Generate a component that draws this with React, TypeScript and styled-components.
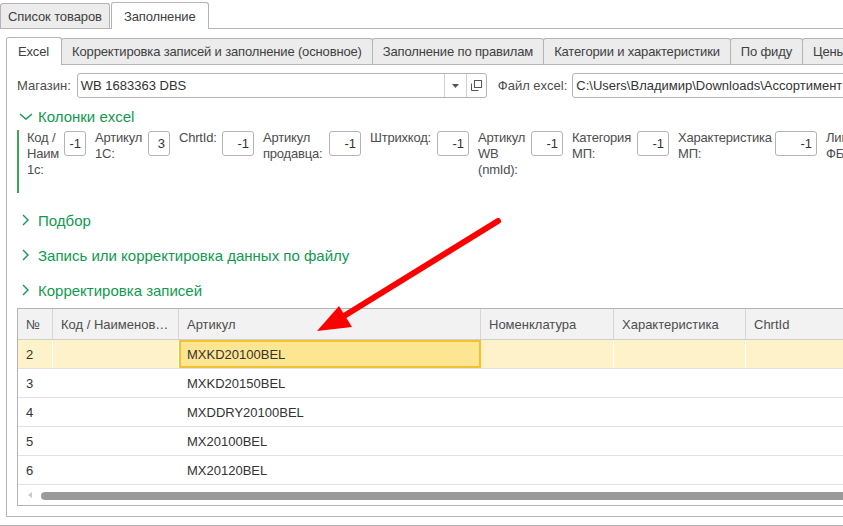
import React from "react";
import styled, { createGlobalStyle } from "styled-components";

const GlobalStyle = createGlobalStyle`
  html, body { margin: 0; padding: 0; background: #fff; overflow: hidden; }
  body { font-family: "Liberation Sans", Arial, sans-serif; font-size: 13px; color: #333; }
  * { box-sizing: border-box; }
`;

const Root = styled.div`
  position: relative;
  width: 843px;
  height: 526px;
  overflow: hidden;
  display: flex;
  flex-direction: column;
`;

const TopTabBar = styled.div`
  display: flex;
  align-items: flex-end;
  height: 29px;
  width: 920px;
  border-bottom: 1px solid #b4b4b4;
`;

const TopTab = styled.div<{ $active?: boolean }>`
  display: flex;
  align-items: center;
  padding: ${(p) => (p.$active ? "0 12px" : "0 7px")};
  height: ${(p) => (p.$active ? "27px" : "25px")};
  margin-bottom: ${(p) => (p.$active ? "-1px" : "0")};
  margin-left: ${(p) => (p.$active ? "1px" : "0")};
  background: ${(p) => (p.$active ? "#fff" : "#ececec")};
  border: 1px solid #b4b4b4;
  border-bottom: none;
  border-radius: 3px 3px 0 0;
  color: #404040;
  white-space: nowrap;
  letter-spacing: -0.1px;
`;

const OuterPage = styled.div`
  flex: 1;
  display: flex;
  flex-direction: column;
  width: 920px;
  padding: 8px 0 8px 6px;
  border-bottom: 1px solid #b4b4b4;
`;

const InnerTabBar = styled.div`
  display: flex;
  align-items: flex-end;
  height: 28px;
  border-bottom: 1px solid #b4b4b4;
`;

const InnerTab = styled.div<{ $active?: boolean }>`
  display: flex;
  align-items: center;
  padding: 0 10px;
  height: ${(p) => (p.$active ? "28px" : "26px")};
  margin-bottom: ${(p) => (p.$active ? "-1px" : "0")};
  margin-left: -1px;
  background: ${(p) => (p.$active ? "#fff" : "#ececec")};
  border: 1px solid #b4b4b4;
  border-bottom: none;
  border-radius: 3px 3px 0 0;
  color: #404040;
  white-space: nowrap;
  letter-spacing: -0.15px;
  &:first-child { margin-left: 0; padding: 0 12px 0 11px; }
`;

const InnerPanel = styled.div`
  flex: 1;
  display: flex;
  flex-direction: column;
  padding: 8px 0 10px 10px;
  border-left: 1px solid #b4b4b4;
  border-bottom: 1px solid #b4b4b4;
`;

const FieldRow = styled.div`
  display: flex;
  align-items: center;
  height: 25px;
`;

const Label = styled.span<{ $ml?: number }>`
  color: #4d4d4d;
  white-space: nowrap;
  margin-left: ${(p) => p.$ml ?? 0}px;
  margin-right: ${(p) => (p.$ml ? 5 : 6)}px;
`;

const InputBox = styled.div<{ $w: number }>`
  display: flex;
  align-items: stretch;
  width: ${(p) => p.$w}px;
  height: 25px;
  border: 1px solid #b4b4b4;
  border-radius: 3px;
  background: #fff;
  flex-shrink: 0;
`;

const InputText = styled.div`
  flex: 1;
  display: flex;
  align-items: center;
  padding-left: 3px;
  color: #333;
  white-space: nowrap;
  overflow: hidden;
`;

const InputButton = styled.div<{ $w: number }>`
  width: ${(p) => p.$w}px;
  display: flex;
  align-items: center;
  justify-content: center;
  border-left: 1px solid #d0d0d0;
  color: #666;
`;

const GroupHeader = styled.div<{ $mt: number }>`
  display: flex;
  align-items: center;
  height: 20px;
  margin-top: ${(p) => p.$mt}px;
  color: #0f9a50;
  font-size: 15px;
  padding-left: 2px;
`;

const Chevron = styled.svg`
  width: 14px;
  height: 14px;
  margin-right: 5px;
  flex-shrink: 0;
`;

const GroupBody = styled.div`
  display: flex;
  align-items: flex-start;
  margin-top: 4px;
  height: 63px;
  border-left: 2px solid #3aa757;
  padding-left: 8px;
  white-space: nowrap;
`;

const ColLabel = styled.div<{ $w: number }>`
  width: ${(p) => p.$w}px;
  line-height: 16px;
  color: #4d4d4d;
  margin-right: 4px;
  flex-shrink: 0;
  white-space: nowrap;
  letter-spacing: -0.2px;
`;

const NumInput = styled.div<{ $w: number }>`
  width: ${(p) => p.$w}px;
  height: 25px;
  margin-top: 1px;
  margin-right: 9px;
  border: 1px solid #b4b4b4;
  border-radius: 3px;
  display: flex;
  align-items: center;
  justify-content: flex-end;
  padding-right: 4px;
  color: #333;
  flex-shrink: 0;
`;

const Table = styled.div`
  margin-top: 8px;
  border: 1px solid #b4b4b4;
  border-right: none;
  display: flex;
  flex-direction: column;
`;

const cols = "35px 126px 302px 133px 132px 180px";

const HeaderRow = styled.div`
  display: grid;
  grid-template-columns: ${cols};
  height: 31px;
  background: #f2f2f2;
  border-bottom: 1px solid #cfcfcf;
`;

const HeaderCell = styled.div`
  display: flex;
  align-items: center;
  padding: 0 8px;
  color: #4d4d4d;
  border-right: 1px solid #d6d6d6;
  white-space: nowrap;
  overflow: hidden;
  min-width: 0;
  & > span { overflow: hidden; text-overflow: ellipsis; }
`;

const Row = styled.div<{ $sel?: boolean }>`
  display: grid;
  grid-template-columns: ${cols};
  height: 29px;
  border-bottom: 1px solid #e2e2e2;
  background: ${(p) => (p.$sel ? "#fdf2c9" : "#fff")};
`;

const Cell = styled.div<{ $sel?: boolean; $focus?: boolean }>`
  display: flex;
  align-items: center;
  padding: 0 8px;
  color: #333;
  white-space: nowrap;
  border-right: 1px solid ${(p) => (p.$sel ? "#fff" : "transparent")};
  ${(p) =>
    p.$focus
      ? `background: #fee591; border: 2px solid #f5c12e; padding: 0 6px;`
      : ""}
`;

const ScrollArea = styled.div`
  height: 20px;
  display: flex;
  align-items: center;
  padding-left: 10px;
`;

const ScrollArrow = styled.div`
  width: 0;
  height: 0;
  border-top: 3px solid transparent;
  border-bottom: 3px solid transparent;
  border-right: 4px solid #c8c8c8;
  margin-right: 9px;
`;

const ScrollThumb = styled.div`
  flex: 1;
  height: 8px;
  margin-top: 1px;
  border-radius: 4px 0 0 4px;
  background: #9a9a9a;
`;

const Overlay = styled.svg`
  position: absolute;
  left: 0;
  top: 0;
  width: 843px;
  height: 526px;
  pointer-events: none;
`;

const DownChevron = () => (
  <Chevron viewBox="0 0 14 14">
    <polyline points="1,5 7,10 13,5" fill="none" stroke="#0f9a50" strokeWidth="1.4" />
  </Chevron>
);

const RightChevron = () => (
  <Chevron viewBox="0 0 14 14">
    <polyline points="4,2 9,7 4,12" fill="none" stroke="#0f9a50" strokeWidth="1.4" />
  </Chevron>
);

const fields = [
  { lines: ["Код /", "Наим", "1с:"], w: 33, value: "-1", iw: 22 },
  { lines: ["Артикул", "1С:"], w: 49, value: "3", iw: 22 },
  { lines: ["ChrtId:"], w: 39, value: "-1", iw: 32 },
  { lines: ["Артикул", "продавца:"], w: 62, value: "-1", iw: 32 },
  { lines: ["Штрихкод:"], w: 63, value: "-1", iw: 32 },
  { lines: ["Артикул", "WB", "(nmId):"], w: 49, value: "-1", iw: 32 },
  { lines: ["Категория", "МП:"], w: 61, value: "-1", iw: 32 },
  { lines: ["Характеристика", "МП:"], w: 93, value: "-1", iw: 42 },
  { lines: ["Лимит", "ФБС:"], w: 60, value: "-1", iw: 32 },
];

const rows = [
  { n: "2", art: "MXKD20100BEL", sel: true },
  { n: "3", art: "MXKD20150BEL" },
  { n: "4", art: "MXDDRY20100BEL" },
  { n: "5", art: "MX20100BEL" },
  { n: "6", art: "MX20120BEL" },
];

export default function App() {
  return (
    <Root>
      <GlobalStyle />
      <TopTabBar>
        <TopTab>Список товаров</TopTab>
        <TopTab $active>Заполнение</TopTab>
      </TopTabBar>
      <OuterPage>
        <InnerTabBar>
          <InnerTab $active>Excel</InnerTab>
          <InnerTab>Корректировка записей и заполнение (основное)</InnerTab>
          <InnerTab>Заполнение по правилам</InnerTab>
          <InnerTab>Категории и характеристики</InnerTab>
          <InnerTab>По фиду</InnerTab>
          <InnerTab>Цены</InnerTab>
        </InnerTabBar>
        <InnerPanel>
          <FieldRow>
            <Label>Магазин:</Label>
            <InputBox $w={410}>
              <InputText>WB 1683363 DBS</InputText>
              <InputButton $w={22}>
                <svg width="7" height="4" viewBox="0 0 7 4">
                  <polygon points="0,0 7,0 3.5,4" fill="#555" />
                </svg>
              </InputButton>
              <InputButton $w={20}>
                <svg width="11" height="11" viewBox="0 0 11 11">
                  <rect x="3.5" y="0.5" width="7" height="7" fill="none" stroke="#555" />
                  <path d="M0.5 3.5 V10.5 H7.5" fill="none" stroke="#555" />
                </svg>
              </InputButton>
            </InputBox>
            <Label $ml={11}>Файл excel:</Label>
            <InputBox $w={320}>
              <InputText>C:\Users\Владимир\Downloads\Ассортимент</InputText>
            </InputBox>
          </FieldRow>

          <GroupHeader $mt={8}>
            <DownChevron />
            Колонки excel
          </GroupHeader>
          <GroupBody>
            {fields.map((f, i) => (
              <React.Fragment key={i}>
                <ColLabel $w={f.w}>
                  {f.lines.map((l, j) => (
                    <div key={j}>{l}</div>
                  ))}
                </ColLabel>
                <NumInput $w={f.iw}>{f.value}</NumInput>
              </React.Fragment>
            ))}
          </GroupBody>

          <GroupHeader $mt={17}>
            <RightChevron />
            Подбор
          </GroupHeader>
          <GroupHeader $mt={15}>
            <RightChevron />
            Запись или корректировка данных по файлу
          </GroupHeader>
          <GroupHeader $mt={15}>
            <RightChevron />
            Корректировка записей
          </GroupHeader>

          <Table>
            <HeaderRow>
              <HeaderCell>№</HeaderCell>
              <HeaderCell>
                <span>Код / Наименование</span>
              </HeaderCell>
              <HeaderCell>Артикул</HeaderCell>
              <HeaderCell>Номенклатура</HeaderCell>
              <HeaderCell>Характеристика</HeaderCell>
              <HeaderCell>ChrtId</HeaderCell>
            </HeaderRow>
            {rows.map((r) => (
              <Row key={r.n} $sel={r.sel}>
                <Cell $sel={r.sel}>{r.n}</Cell>
                <Cell $sel={r.sel}></Cell>
                <Cell $sel={r.sel} $focus={r.sel}>
                  {r.art}
                </Cell>
                <Cell $sel={r.sel}></Cell>
                <Cell $sel={r.sel}></Cell>
                <Cell $sel={r.sel}></Cell>
              </Row>
            ))}
            <ScrollArea>
              <ScrollArrow />
              <ScrollThumb />
            </ScrollArea>
          </Table>
        </InnerPanel>
      </OuterPage>

      <Overlay viewBox="0 0 843 526">
        <line x1="498" y1="221" x2="344" y2="316" stroke="#ff0000" strokeWidth="6" strokeLinecap="round" />
        <polygon points="317,331 339,306 352,327" fill="#ff0000" />
      </Overlay>
    </Root>
  );
}
